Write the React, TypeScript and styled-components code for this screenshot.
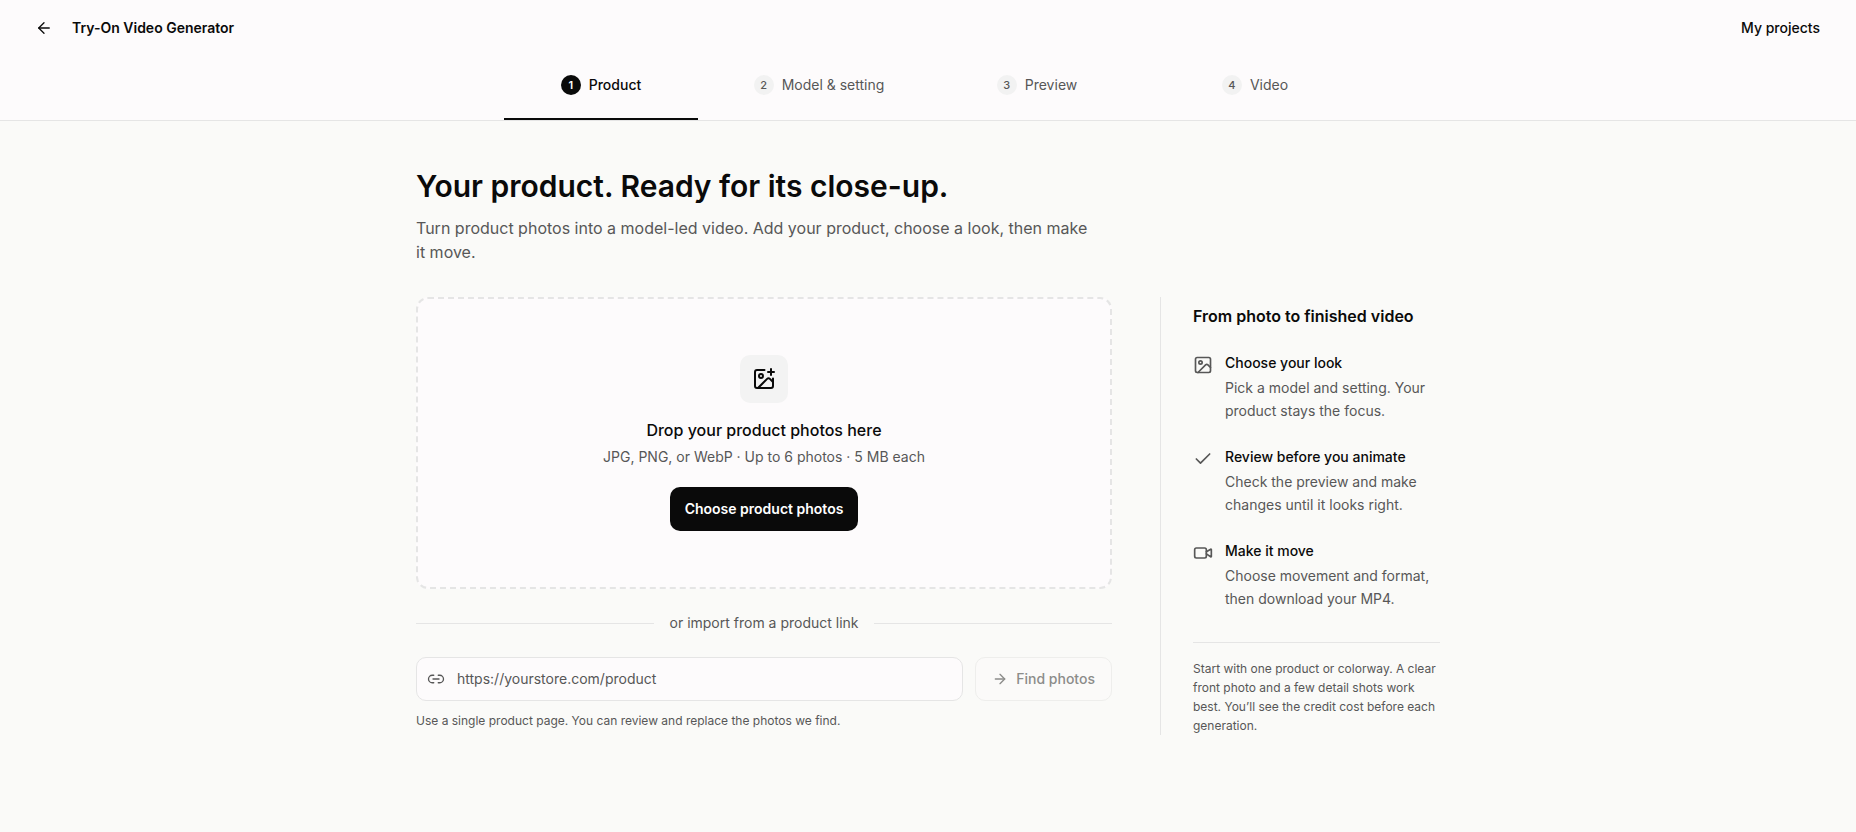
import React from "react";
import styled, { createGlobalStyle } from "styled-components";
import { ArrowLeft, ArrowRight, Check, Image, ImagePlus, Link2, Video } from "lucide-react";

const ink = "#0a0a0a";
const muted = "#575757";
const line = "#e5e5e5";
const surface = "#fdfbfc";

const GlobalStyle = createGlobalStyle`
  *, *::before, *::after { box-sizing: border-box; }
  body {
    margin: 0;
    background: #fafaf8;
    color: ${ink};
    font-family: Inter, "Liberation Sans", sans-serif;
    font-size: 14px;
    line-height: 20px;
  }
  h1, h2, h3, p, ol, ul { margin: 0; padding: 0; list-style: none; }
  button, input { font: inherit; color: inherit; }
`;

const Header = styled.header`
  background: ${surface};
  border-bottom: 1px solid ${line};
`;

const TopBar = styled.div`
  display: flex;
  align-items: center;
  height: 56px;
  padding: 0 36px 0 24px;
`;

const BackButton = styled.button`
  display: flex;
  align-items: center;
  justify-content: center;
  width: 40px;
  height: 40px;
  padding: 0;
  border: 0;
  background: none;
`;

const PageName = styled.p`
  flex: 1;
  padding-left: 8px;
  font-weight: 600;
`;

const ProjectsLink = styled.a`
  color: inherit;
  font-weight: 500;
  text-decoration: none;
`;

const Steps = styled.ol`
  display: grid;
  grid-template-columns: repeat(4, 1fr);
  gap: 24px;
  max-width: 896px;
  margin: 0 auto;
  padding: 0 24px;
`;

const Step = styled.li<{ $active?: boolean }>`
  display: flex;
  align-items: center;
  justify-content: center;
  gap: 8px;
  height: 64px;
  padding-bottom: 4px;
  border-bottom: 2px solid ${(p) => (p.$active ? ink : "transparent")};
  color: ${(p) => (p.$active ? ink : muted)};
  font-weight: ${(p) => (p.$active ? 500 : 400)};
`;

const StepNumber = styled.span<{ $active?: boolean }>`
  width: 20px;
  height: 20px;
  border-radius: 50%;
  background: ${(p) => (p.$active ? ink : "#f2f2f2")};
  color: ${(p) => (p.$active ? "#fff" : muted)};
  font-size: 11px;
  font-weight: ${(p) => (p.$active ? 600 : 500)};
  text-align: center;
`;

const Main = styled.main`
  max-width: 1072px;
  margin: 0 auto;
  padding: 45px 24px 80px;
`;

const Title = styled.h1`
  font-size: 30px;
  font-weight: 600;
  line-height: 40px;
`;

const Intro = styled.p`
  max-width: 672px;
  margin-top: 10px;
  color: ${muted};
  font-size: 16px;
  line-height: 24px;
`;

const Columns = styled.div`
  display: grid;
  grid-template-columns: minmax(0, 1fr) 280px;
  gap: 48px;
  margin-top: 33px;
`;

const DropZone = styled.section`
  display: flex;
  flex-direction: column;
  align-items: center;
  padding: 56px 24px;
  border: 2px dashed ${line};
  border-radius: 12px;
  background: ${surface};
`;

const IconTile = styled.div`
  display: flex;
  align-items: center;
  justify-content: center;
  width: 48px;
  height: 48px;
  border-radius: 10px;
  background: #f3f3f3;
`;

const DropTitle = styled.h2`
  margin-top: 15px;
  font-size: 16px;
  font-weight: 500;
  line-height: 24px;
`;

const DropHint = styled.p`
  margin-top: 5px;
  color: ${muted};
`;

const PrimaryButton = styled.button`
  height: 44px;
  margin-top: 20px;
  padding: 0 15px;
  border: 0;
  border-radius: 10px;
  background: ${ink};
  color: #fff;
  font-weight: 600;
`;

const Divider = styled.div`
  display: flex;
  align-items: center;
  gap: 16px;
  margin-top: 24px;
  color: ${muted};

  &::before,
  &::after {
    content: "";
    flex: 1;
    height: 1px;
    background: ${line};
  }
`;

const ImportForm = styled.form`
  display: flex;
  gap: 12px;
  margin-top: 24px;
`;

const UrlField = styled.label`
  display: flex;
  flex: 1;
  align-items: center;
  gap: 12px;
  height: 44px;
  padding: 0 10px;
  border: 1px solid ${line};
  border-radius: 10px;
  background: ${surface};
  color: ${muted};
`;

const UrlInput = styled.input`
  flex: 1;
  min-width: 0;
  padding: 0;
  border: 0;
  outline: 0;
  background: none;

  &::placeholder {
    color: ${muted};
    opacity: 1;
  }
`;

const FindButton = styled.button`
  display: flex;
  align-items: center;
  gap: 8px;
  height: 44px;
  padding: 0 16px;
  border: 1px solid #eeeeec;
  border-radius: 10px;
  background: #fbfaf9;
  color: #8c8c8a;
  font-weight: 500;
`;

const Help = styled.p`
  margin-top: 10px;
  color: ${muted};
  font-size: 12px;
`;

const Aside = styled.aside`
  padding: 7px 0 0 32px;
  border-left: 1px solid ${line};
`;

const AsideTitle = styled.h2`
  font-size: 16px;
  font-weight: 600;
  line-height: 24px;
`;

const Benefits = styled.ul`
  display: grid;
  gap: 25px;
  margin-top: 25px;
`;

const Benefit = styled.li`
  display: flex;
  gap: 12px;

  svg {
    flex: none;
    margin-top: 2px;
    color: ${muted};
  }
`;

const BenefitTitle = styled.h3`
  font-size: 14px;
  font-weight: 500;
`;

const BenefitText = styled.p`
  margin-top: 3px;
  color: ${muted};
  line-height: 23px;
`;

const Note = styled.p`
  margin-top: 32px;
  padding-top: 16px;
  border-top: 1px solid ${line};
  color: ${muted};
  font-size: 12px;
  line-height: 19px;
`;

const steps = ["Product", "Model & setting", "Preview", "Video"];

const benefits = [
  { Icon: Image, title: "Choose your look", text: "Pick a model and setting. Your product stays the focus." },
  { Icon: Check, title: "Review before you animate", text: "Check the preview and make changes until it looks right." },
  { Icon: Video, title: "Make it move", text: "Choose movement and format, then download your MP4." },
];

export default function App() {
  return (
    <>
      <GlobalStyle />
      <Header>
        <TopBar>
          <BackButton type="button" aria-label="Back">
            <ArrowLeft size={18} strokeWidth={1.75} />
          </BackButton>
          <PageName>Try-On Video Generator</PageName>
          <ProjectsLink href="#projects">My projects</ProjectsLink>
        </TopBar>
        <Steps>
          {steps.map((name, i) => (
            <Step key={name} $active={i === 0} aria-current={i === 0 ? "step" : undefined}>
              <StepNumber $active={i === 0}>{i + 1}</StepNumber>
              {name}
            </Step>
          ))}
        </Steps>
      </Header>
      <Main>
        <Title>Your product. Ready for its close-up.</Title>
        <Intro>
          Turn product photos into a model-led video. Add your product, choose a look, then make it move.
        </Intro>
        <Columns>
          <div>
            <DropZone>
              <IconTile>
                <ImagePlus size={24} />
              </IconTile>
              <DropTitle>Drop your product photos here</DropTitle>
              <DropHint>JPG, PNG, or WebP · Up to 6 photos · 5 MB each</DropHint>
              <PrimaryButton type="button">Choose product photos</PrimaryButton>
            </DropZone>
            <Divider>or import from a product link</Divider>
            <ImportForm onSubmit={(e) => e.preventDefault()}>
              <UrlField>
                <Link2 size={18} strokeWidth={1.75} />
                <UrlInput
                  type="url"
                  aria-label="Product link"
                  aria-describedby="link-help"
                  placeholder="https://yourstore.com/product"
                />
              </UrlField>
              <FindButton type="submit" disabled>
                <ArrowRight size={16} />
                Find photos
              </FindButton>
            </ImportForm>
            <Help id="link-help">Use a single product page. You can review and replace the photos we find.</Help>
          </div>
          <Aside>
            <AsideTitle>From photo to finished video</AsideTitle>
            <Benefits>
              {benefits.map(({ Icon, title, text }) => (
                <Benefit key={title}>
                  <Icon size={20} />
                  <div>
                    <BenefitTitle>{title}</BenefitTitle>
                    <BenefitText>{text}</BenefitText>
                  </div>
                </Benefit>
              ))}
            </Benefits>
            <Note>
              Start with one product or colorway. A clear front photo and a few detail shots work best. You’ll see
              the credit cost before each generation.
            </Note>
          </Aside>
        </Columns>
      </Main>
    </>
  );
}
